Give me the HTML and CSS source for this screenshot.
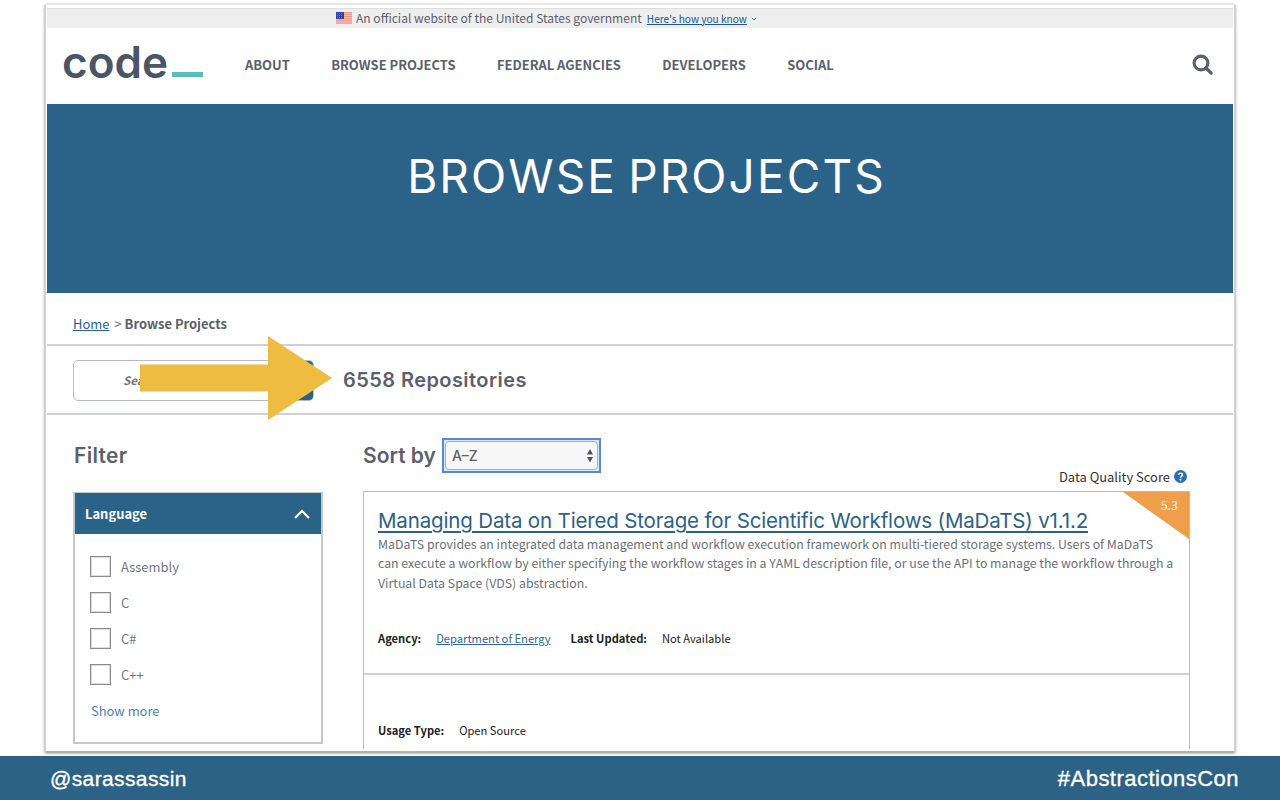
FILE: index.html
```html
<!DOCTYPE html>
<html lang="en">
<head>
<meta charset="utf-8">
<title>Browse Projects</title>
<link rel="stylesheet" href="styles.css">
</head>
<body>
<div class="slide">
  <main class="window">
    <div class="gov-banner">
      <svg class="flag" viewBox="0 0 16 12" width="16" height="12"><rect width="16" height="12" fill="#f5c9bd"/><path d="M0 .7h16M0 2.7h16M0 4.7h16M0 6.7h16M0 8.7h16M0 11h16" stroke="#e58d7d" stroke-width="1"/><rect width="8" height="7" fill="#3444ae"/><path d="M1 1.5h6M1 3.5h6M1 5.5h6" stroke="#7e8bd2" stroke-width=".7" stroke-dasharray="1 1"/></svg>
      <span class="gov-text">An official website of the United States government</span>
      <a class="gov-link">Here's how you know</a>
      <svg class="tiny" viewBox="0 0 6 4" width="6" height="4"><path d="M.8.8 3 3 5.200.8" fill="none" stroke="#4a77ad"/></svg>
    </div>
    <header class="header">
      <div class="logo"><span class="logo-word">code</span><span class="logo-bar"></span></div>
      <nav class="nav">
        <a>ABOUT</a><a>BROWSE PROJECTS</a><a>FEDERAL AGENCIES</a><a>DEVELOPERS</a><a>SOCIAL</a>
      </nav>
      <svg class="search-icon" viewBox="0 0 22 22" width="22" height="22"><circle cx="9" cy="9" r="6.900" fill="none" stroke="#5b616b" stroke-width="3.100"/><path d="m14 14 5.200 5.200" stroke="#5b616b" stroke-width="3.300" stroke-linecap="round"/></svg>
    </header>
    <section class="hero"><h1 class="hero-title">BROWSE PROJECTS</h1></section>
    <div class="crumbs"><a class="crumb-home">Home</a><span class="crumb-sep">&gt;</span><b>Browse Projects</b></div>
    <div class="searchbar">
      <div class="searchbox"><span class="search-hint">Search</span><span class="search-btn"></span></div>
      <h2 class="count">6558 Repositories</h2>
    </div>
    <div class="content">
      <aside class="filter">
        <h2 class="filter-title">Filter</h2>
        <div class="panel">
          <div class="panel-head"><span>Language</span><svg viewBox="0 0 18 12" width="18" height="12"><path d="m2 10 7-7 7 7" fill="none" stroke="#fff" stroke-width="2.200"/></svg></div>
          <div class="panel-body">
            <label class="opt"><i class="box"></i><span>Assembly</span></label>
            <label class="opt"><i class="box"></i><span>C</span></label>
            <label class="opt"><i class="box"></i><span>C#</span></label>
            <label class="opt"><i class="box"></i><span>C++</span></label>
            <a class="more">Show more</a>
          </div>
        </div>
      </aside>
      <section class="results">
        <div class="sort"><span class="sort-label">Sort by</span>
          <div class="select"><div class="select-in"><span>A–Z</span><svg viewBox="0 0 6 14" width="6" height="14"><path d="M3 0 6 5.500H0zM3 13.500 0 8h6z" fill="#4f535a"/></svg></div></div>
        </div>
        <div class="score-row"><span>Data Quality Score</span><svg class="help" viewBox="0 0 12 12" width="13" height="13"><circle cx="6" cy="6" r="6" fill="#2a6ebb"/><path d="M4.200 4.700C4.200 2.500 7.800 2.600 7.800 4.600 7.800 5.900 6 5.800 6 7.200" fill="none" stroke="#fff" stroke-width="1.400"/><circle cx="6" cy="9" r=".9" fill="#fff"/></svg></div>
        <article class="card">
          <div class="card-main">
            <svg class="corner" viewBox="0 0 66 47" width="66" height="47"><path d="M0 0h66v47z" fill="#f09d4c"/></svg><span class="score">5.3</span>
            <h3 class="card-title"><a class="card-link">Managing Data on Tiered Storage for Scientific Workflows (MaDaTS) v1.1.2</a></h3>
            <p class="desc">MaDaTS provides an integrated data management and workflow execution framework on multi-tiered storage systems. Users of MaDaTS<br>can execute a workflow by either specifying the workflow stages in a YAML description file, or use the API to manage the workflow through a<br>Virtual Data Space (VDS) abstraction.</p>
            <div class="meta"><b>Agency:</b><a class="agency">Department of Energy</a><b>Last Updated:</b><span class="value">Not Available</span></div>
          </div>
          <div class="card-extra meta"><b>Usage Type:</b><span class="value">Open Source</span></div>
        </article>
      </section>
    </div>
  </main>
  <svg class="arrow" viewBox="0 0 192 84" width="192" height="84"><path d="M0 28.500h128V0l64 42-64 42V55.500H0z" fill="#eebc40"/></svg>
  <footer class="footer"><span class="handle">@sarassassin</span><span class="tag">#AbstractionsCon</span></footer>
</div>
</body>
</html>
```
FILE: styles.css
```css
* { box-sizing: border-box; margin: 0; padding: 0; }
body { width: 1280px; height: 800px; overflow: hidden; background: #fff; color: #5b616b; font-family: "Noto Sans CJK JP", "Noto Sans", sans-serif; font-size: 12.95px; }
svg { display: block; flex: none; }
span, a, b, h1, h2, h3 { white-space: nowrap; }
.slide { position: relative; height: 800px; display: flex; flex-direction: column; }
.window { width: 1190px; height: 748px; margin: 4px 0 0 45px; padding: 3px 1px 2px; overflow: hidden; background: #fff; border: 1px solid #d0d2d4; border-top-color: #e6e6e6; border-bottom-color: #b0b3b5; box-shadow: 0 1px 3px rgba(0,0,0,.5); flex: none; }
.gov-banner { height: 20px; display: flex; align-items: center; padding: 0 0 1px 289px; background: #eee; border-top: 1px solid #ddd; }
.gov-text { margin: -1px 0 1px 4px; font-size: 12.05px; }
.gov-link { margin-left: 5px; padding-top: 1px; font-size: 10.1px; color: #205493; text-decoration: underline; }
.tiny { margin: 2px 0 0 4px; }
.header { height: 76px; display: flex; align-items: center; padding: 0 19px 4px 16px; }
.logo { width: 182px; display: flex; align-items: flex-end; margin-top: -5px; }
.logo-word { font: 600 44px/44px Inter, sans-serif; color: #4a5565; margin-left: -1px; }
.logo-bar { width: 31px; height: 5px; background: #5bbcb8; margin: 0 0 7px 4px; }
.nav { display: flex; gap: 41.4px; flex: 1; font-weight: 700; }
.search-icon { margin-top: 1px; }
.hero { height: 189px; background: #2b6288; display: flex; justify-content: center; padding: 45px 0 0 13px; }
.hero-title { font: 400 46px/54px Inter, sans-serif; letter-spacing: 2.1px; word-spacing: -4px; color: #fff; }
.crumbs { height: 53px; border-bottom: 2px solid #d0d1d3; display: flex; align-items: center; padding: 10px 0 0 26px; line-height: 20px; }
.crumb-home { color: #2b6288; text-decoration: underline; }
.crumb-sep { margin: 0 3px 0 5px; }
.searchbar { height: 69px; border-bottom: 2px solid #d0d1d3; display: flex; align-items: center; padding-left: 26px; }
.searchbox { width: 241px; height: 41px; border: 1px solid #b8bbc1; border-radius: 5px; display: flex; justify-content: space-between; align-items: center; padding-left: 49px; overflow: hidden; margin-top: 1px; }
.search-hint { font-style: italic; font-weight: 700; font-size: 11.5px; color: #757575; }
.search-btn { width: 42px; height: 41px; background: #2b6288; }
.count { margin-left: 29px; font: 600 20px/24px Inter, sans-serif; letter-spacing: .43px; }
.content { display: flex; padding-left: 26px; }
.filter { width: 250px; }
.filter-title { font: 600 21px/26px Inter, sans-serif; letter-spacing: .3px; margin: 28px 0 0 1px; }
.panel { margin-top: 23px; height: 252px; border: 2px solid #c6c9cc; border-top-width: 1px; }
.panel-head { height: 41px; background: #2b6288; color: #fff; font-weight: 700; display: flex; align-items: center; justify-content: space-between; padding: 0 10px; }
.panel-body { padding: 14px 0 0 15px; }
.opt { height: 36px; display: flex; align-items: center; gap: 10px; color: #74777c; }
.box { width: 21px; height: 21px; border: 1px solid #8c8c8c; box-shadow: inset 0 0 0 1px #ddd; }
.more { display: block; line-height: 20px; margin: 9px 0 0 1px; color: #4a81c3; }
.results { width: 827px; margin-left: 40px; padding-top: 23px; }
.sort { display: flex; height: 35px; align-items: center; }
.sort-label { font: 600 21px/26px Inter, sans-serif; }
.select { width: 159px; height: 35px; margin-left: 6px; border: 2px solid #5489dd; background: #dce8fa; padding: 1px; }
.select-in { height: 100%; border: 1px solid #aaadb1; border-radius: 4px; background: #f7f7f7; display: flex; align-items: center; justify-content: space-between; padding: 0 4px 0 6px; font: 500 14px/20px Inter, sans-serif; }
.score-row { height: 18px; display: flex; justify-content: flex-end; align-items: center; gap: 4px; padding: 0 3px 12px 0; color: #333; }
.card { border: 1px solid #b9bcc2; border-bottom: 0; height: 258px; }
.card-main { height: 183px; border-bottom: 2px solid #d0d1d3; padding: 16px 0 0 14px; position: relative; }
.corner { position: absolute; right: 0; top: 0; }
.score { position: absolute; right: 11px; top: 3px; line-height: 20px; font-size: 12.5px; color: #fff0dd; }
.card-title { font: 400 20.5px/26px Inter, sans-serif; letter-spacing: -.155px; }
.card-link { color: #2b6288; text-decoration: underline; text-decoration-thickness: 2px; text-underline-offset: 3px; }
.desc { font-size: 12.32px; line-height: 19.6px; margin-top: .5px; color: #6b7078; white-space: nowrap; }
.meta { display: flex; font-size: 11.17px; line-height: 20px; color: #222; }
.card-main .meta { margin-top: 35px; }
.agency { color: #2f6890; text-decoration: underline; margin: 0 20px 0 15px; }
.value { margin-left: 15px; }
.card-extra { padding: 45px 0 0 14px; }
.arrow { position: absolute; left: 140px; top: 336px; }
.footer { position: absolute; left: 0; right: 0; top: 756px; height: 44px; background: #2b6285; display: flex; justify-content: space-between; align-items: center; padding: 2px 41px 0 50px; color: #fff; font: 21px/26px "Liberation Sans", sans-serif; -webkit-text-stroke: .35px #fff; }
.handle { letter-spacing: .38px; }
.tag { font-size: 22px; letter-spacing: .47px; }
```
